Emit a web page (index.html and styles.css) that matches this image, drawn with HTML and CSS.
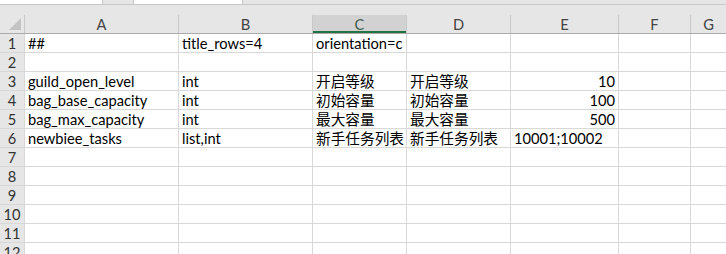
FILE: index.html
```html
<!DOCTYPE html>
<html lang="zh-CN">
<head>
    <meta charset="UTF-8">
    <title>Sheet1</title>
    <link rel="stylesheet" href="styles.css">
</head>
<body>
    <div class="topbar">
        <div class="namebox"></div>
        <div class="formula"></div>
    </div>
    <div class="colhead">
        <div class="colrow">
            <div class="corner"><span class="tri"></span></div>
            <div class="ch">A</div>
            <div class="ch">B</div>
            <div class="ch sel">C</div>
            <div class="ch">D</div>
            <div class="ch">E</div>
            <div class="ch">F</div>
            <div class="ch">G</div>
        </div>
    </div>
    <div class="grid">
        <div class="rh">1</div><div class="c">##</div><div class="c">title_rows=4</div><div class="c">orientation=c</div><div class="c"></div><div class="c"></div><div class="c"></div><div class="c"></div>
        <div class="rh">2</div><div class="c"></div><div class="c"></div><div class="c"></div><div class="c"></div><div class="c"></div><div class="c"></div><div class="c"></div>
        <div class="rh">3</div><div class="c">guild_open_level</div><div class="c">int</div><div class="c">开启等级</div><div class="c">开启等级</div><div class="c num">10</div><div class="c"></div><div class="c"></div>
        <div class="rh">4</div><div class="c">bag_base_capacity</div><div class="c">int</div><div class="c">初始容量</div><div class="c">初始容量</div><div class="c num">100</div><div class="c"></div><div class="c"></div>
        <div class="rh">5</div><div class="c">bag_max_capacity</div><div class="c">int</div><div class="c">最大容量</div><div class="c">最大容量</div><div class="c num">500</div><div class="c"></div><div class="c"></div>
        <div class="rh">6</div><div class="c">newbiee_tasks</div><div class="c">list,int</div><div class="c">新手任务列表</div><div class="c">新手任务列表</div><div class="c">10001;10002</div><div class="c"></div><div class="c"></div>
        <div class="rh">7</div><div class="c"></div><div class="c"></div><div class="c"></div><div class="c"></div><div class="c"></div><div class="c"></div><div class="c"></div>
        <div class="rh">8</div><div class="c"></div><div class="c"></div><div class="c"></div><div class="c"></div><div class="c"></div><div class="c"></div><div class="c"></div>
        <div class="rh">9</div><div class="c"></div><div class="c"></div><div class="c"></div><div class="c"></div><div class="c"></div><div class="c"></div><div class="c"></div>
        <div class="rh">10</div><div class="c"></div><div class="c"></div><div class="c"></div><div class="c"></div><div class="c"></div><div class="c"></div><div class="c"></div>
        <div class="rh">11</div><div class="c"></div><div class="c"></div><div class="c"></div><div class="c"></div><div class="c"></div><div class="c"></div><div class="c"></div>
        <div class="rh">12</div><div class="c"></div><div class="c"></div><div class="c"></div><div class="c"></div><div class="c"></div><div class="c"></div><div class="c"></div>
    </div>
</body>
</html>
```

FILE: styles.css
```css
html, body {
    margin: 0;
    background-color: #fff;
    overflow: hidden;
}
body {
    --cols: 24px 153px 133px 93px 103px 107px 71px 1fr;
    font-family: 'Lato', 'Noto Sans CJK SC', sans-serif;
    font-size: 14.67px;
    color: #000;
}
.topbar {
    display: flex;
    height: 4px;
    background-color: #e6e6e6;
    border-bottom: 1px solid #c6c6c6;
}
.namebox {
    width: 102px;
    background-color: #fff;
    border-right: 1px solid #c6c6c6;
}
.formula {
    width: 108px;
    margin-left: 30px;
    background-color: #fff;
    border-left: 1px solid #c6c6c6;
    border-right: 1px solid #c6c6c6;
}
.colhead {
    background-color: #e6e6e6;
    padding-top: 10px;
    border-bottom: 1px solid #ababab;
}
.colrow {
    display: grid;
    grid-template-columns: var(--cols);
    column-gap: 1px;
    height: 18px;
    background-color: #c8c8c8;
}
.ch, .corner {
    background-color: #e6e6e6;
    text-align: center;
    line-height: 17px;
    padding-top: 1px;
    color: #444;
}
.ch.sel {
    background-color: #d2d2d2;
    color: #3d5e4b;
    box-shadow: inset 0 -2px 0 #217346;
}
.corner {
    position: relative;
}
.tri {
    position: absolute;
    right: 3px;
    bottom: 3px;
    width: 0;
    height: 0;
    border-left: 12px solid transparent;
    border-bottom: 12px solid #c3c3c3;
}
.grid {
    display: grid;
    grid-template-columns: var(--cols);
    grid-auto-rows: 18px;
    gap: 1px;
    background-color: #d8d8d8;
}
.rh {
    background-color: #e6e6e6;
    text-align: center;
    line-height: 17px;
    padding-top: 1px;
    color: #333;
}
.c {
    background-color: #fff;
    line-height: 17px;
    padding: 1px 0 0 3px;
    white-space: nowrap;
}
.num {
    text-align: right;
    padding-right: 3px;
}
```
